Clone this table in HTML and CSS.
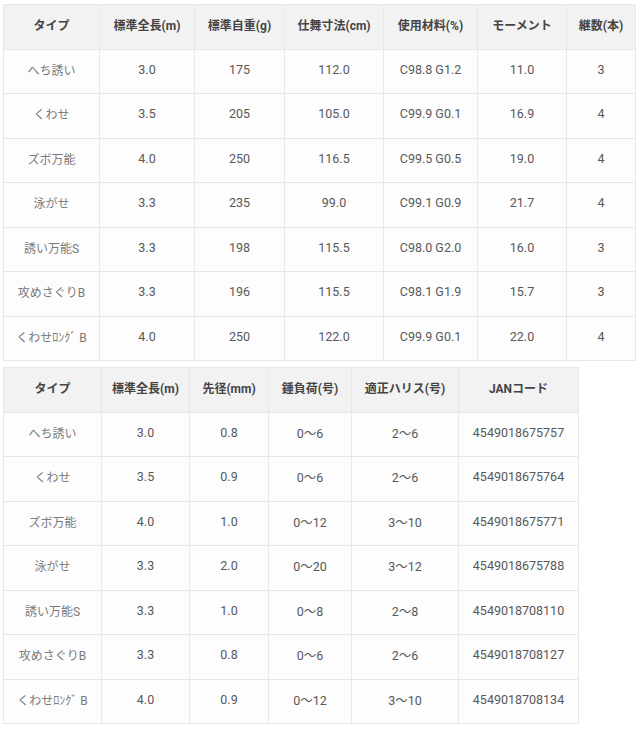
FILE: index.html
```html
<!DOCTYPE html>
<html lang="ja">
<head>
<meta charset="utf-8">
<link rel="stylesheet" href="styles.css">
</head>
<body>
<table class="spec spec-a">
  <colgroup>
    <col class="a1"><col class="a2"><col class="a3"><col class="a4"><col class="a5"><col class="a6"><col class="a7">
  </colgroup>
  <thead>
    <tr><th>タイプ</th><th>標準全長(m)</th><th>標準自重(g)</th><th>仕舞寸法(cm)</th><th>使用材料(%)</th><th>モーメント</th><th>継数(本)</th></tr>
  </thead>
  <tbody>
    <tr><td class="name">へち誘い</td><td>3.0</td><td>175</td><td>112.0</td><td>C98.8 G1.2</td><td>11.0</td><td>3</td></tr>
    <tr><td class="name">くわせ</td><td>3.5</td><td>205</td><td>105.0</td><td>C99.9 G0.1</td><td>16.9</td><td>4</td></tr>
    <tr><td class="name">ズボ万能</td><td>4.0</td><td>250</td><td>116.5</td><td>C99.5 G0.5</td><td>19.0</td><td>4</td></tr>
    <tr><td class="name">泳がせ</td><td>3.3</td><td>235</td><td>99.0</td><td>C99.1 G0.9</td><td>21.7</td><td>4</td></tr>
    <tr><td class="name">誘い万能S</td><td>3.3</td><td>198</td><td>115.5</td><td>C98.0 G2.0</td><td>16.0</td><td>3</td></tr>
    <tr><td class="name">攻めさぐりB</td><td>3.3</td><td>196</td><td>115.5</td><td>C98.1 G1.9</td><td>15.7</td><td>3</td></tr>
    <tr><td class="name">くわせﾛﾝｸﾞ B</td><td>4.0</td><td>250</td><td>122.0</td><td>C99.9 G0.1</td><td>22.0</td><td>4</td></tr>
  </tbody>
</table>
<table class="spec spec-b">
  <colgroup>
    <col class="b1"><col class="b2"><col class="b3"><col class="b4"><col class="b5"><col class="b6">
  </colgroup>
  <thead>
    <tr><th>タイプ</th><th>標準全長(m)</th><th>先径(mm)</th><th>錘負荷(号)</th><th>適正ハリス(号)</th><th>JANコード</th></tr>
  </thead>
  <tbody>
    <tr><td class="name">へち誘い</td><td>3.0</td><td>0.8</td><td>0〜6</td><td>2〜6</td><td>4549018675757</td></tr>
    <tr><td class="name">くわせ</td><td>3.5</td><td>0.9</td><td>0〜6</td><td>2〜6</td><td>4549018675764</td></tr>
    <tr><td class="name">ズボ万能</td><td>4.0</td><td>1.0</td><td>0〜12</td><td>3〜10</td><td>4549018675771</td></tr>
    <tr><td class="name">泳がせ</td><td>3.3</td><td>2.0</td><td>0〜20</td><td>3〜12</td><td>4549018675788</td></tr>
    <tr><td class="name">誘い万能S</td><td>3.3</td><td>1.0</td><td>0〜8</td><td>2〜8</td><td>4549018708110</td></tr>
    <tr><td class="name">攻めさぐりB</td><td>3.3</td><td>0.8</td><td>0〜6</td><td>2〜6</td><td>4549018708127</td></tr>
    <tr><td class="name">くわせﾛﾝｸﾞ B</td><td>4.0</td><td>0.9</td><td>0〜12</td><td>3〜10</td><td>4549018708134</td></tr>
  </tbody>
</table>
</body>
</html>
```

FILE: styles.css
```css
html, body {
  margin: 0;
  padding: 0;
  background: #ffffff;
}
body {
  padding: 4px 0 0 3px;
  font-family: Roboto, "Noto Sans CJK JP", sans-serif;
  font-size: 12.5px;
  color: #585858;
}
.spec {
  border-collapse: collapse;
  table-layout: fixed;
  background: #fdfdfd;
}
.spec-a { width: 632px; }
.spec-b { width: 575px; margin-top: 6px; }
.spec th,
.spec td {
  border: 1px solid #e7e7ee;
  text-align: center;
  vertical-align: middle;
  padding: 0 0 4px 0;
  height: 44.5px;
  box-sizing: border-box;
  white-space: nowrap;
}
.spec th {
  background: #f2f2f3;
  color: #444444;
  font-weight: bold;
  font-size: 12px;
}
.spec td.name {
  color: #7a7a7a;
  font-size: 12px;
}
.a1 { width: 96px; }
.a2 { width: 95px; }
.a3 { width: 90px; }
.a4 { width: 99px; }
.a5 { width: 94px; }
.a6 { width: 89px; }
.a7 { width: 69px; }
.b1 { width: 98px; }
.b2 { width: 88px; }
.b3 { width: 79px; }
.b4 { width: 83px; }
.b5 { width: 107px; }
.b6 { width: 120px; }
```
